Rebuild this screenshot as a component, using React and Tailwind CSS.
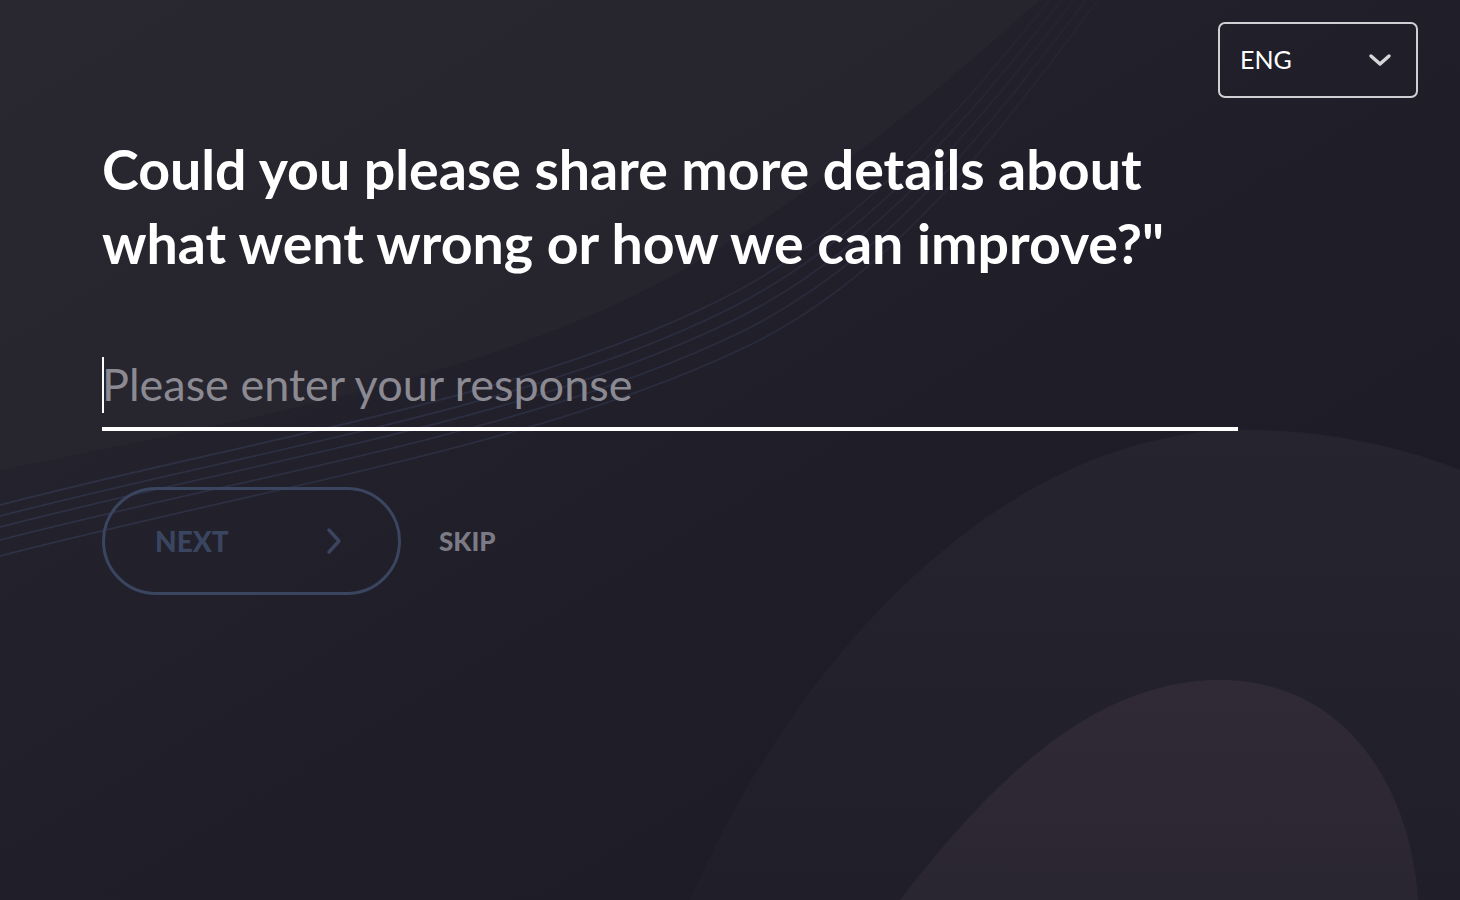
import { useState } from "react";

function Backdrop() {
  return (
    <svg className="absolute inset-0 h-full w-full" viewBox="0 0 1460 900" preserveAspectRatio="none">
      <defs>
        <linearGradient id="bg" x1="0" y1="0" x2="1" y2="1">
          <stop offset="0" stopColor="#292831" />
          <stop offset="0.5" stopColor="#1f1e29" />
          <stop offset="1" stopColor="#1b1a24" />
        </linearGradient>
        <linearGradient id="outer" x1="0" y1="0" x2="0" y2="1">
          <stop offset="0" stopColor="#25242f" />
          <stop offset="1" stopColor="#1f1e29" />
        </linearGradient>
        <linearGradient id="inner" x1="0" y1="0" x2="0" y2="1">
          <stop offset="0" stopColor="#302a36" />
          <stop offset="1" stopColor="#2a2631" />
        </linearGradient>
        <linearGradient id="swoosh" x1="0" y1="1" x2="1" y2="0">
          <stop offset="0" stopColor="#3a4260" stopOpacity="0.5" />
          <stop offset="0.6" stopColor="#3a4260" stopOpacity="0.35" />
          <stop offset="1" stopColor="#3a4260" stopOpacity="0.1" />
        </linearGradient>
      </defs>
      <rect width="1460" height="900" fill="url(#bg)" />
      <path d="M0 470 C 250 420, 520 370, 700 260 C 850 170, 960 70, 1040 0 L 0 0 Z" fill="#29283099" />
      <path d="M690 900 C 800 650, 1000 440, 1230 430 C 1330 428, 1410 450, 1460 470 L 1460 900 Z" fill="url(#outer)" />
      <path d="M900 900 C 1000 770, 1100 680, 1220 680 C 1340 680, 1410 780, 1418 900 Z" fill="url(#inner)" />
      <g fill="none" stroke="url(#swoosh)" strokeWidth="1.6">
        <path d="M0 505 C 250 440, 520 400, 720 300 C 860 230, 960 110, 1050 0" />
        <path d="M0 516 C 255 450, 525 410, 727 310 C 868 240, 968 118, 1062 0" />
        <path d="M0 527 C 260 460, 530 420, 734 320 C 876 250, 976 126, 1074 0" />
        <path d="M0 540 C 265 472, 535 432, 741 332 C 884 262, 984 134, 1086 0" />
        <path d="M0 556 C 270 486, 540 446, 748 346 C 892 276, 992 142, 1098 0" />
      </g>
    </svg>
  );
}

export default function App() {
  const [value, setValue] = useState("");
  return (
    <div className="relative h-[900px] w-full overflow-hidden bg-[#1e1d28]" style={{ fontFamily: "Lato, 'Open Sans', sans-serif" }}>
      <Backdrop />
      <div className="relative flex justify-end px-[42px] pt-[22px]">
        <button className="flex h-[76px] w-[200px] items-center justify-between rounded-[7px] border-2 border-[#cfcfd4] pl-[20px] pr-[24px] text-[25px] text-white">
          <span>ENG</span>
          <svg width="24" height="16" viewBox="0 0 24 16" fill="none" stroke="#d6d6da" strokeWidth="3.5" strokeLinecap="round" strokeLinejoin="round">
            <path d="M3 4 L12 12 L21 4" />
          </svg>
        </button>
      </div>
      <div className="relative pl-[102px] pt-[34px]">
        <h1 className="w-[1250px] text-[55.5px] font-bold leading-[74px] text-white">
          Could you please share more details about
          <br />
          what went wrong or how we can improve?"
        </h1>
        <div className="mt-[77px] w-[1136px] border-b-4 border-white pb-[14px]">
          <input
            value={value}
            onChange={(e) => setValue(e.target.value)}
            placeholder="Please enter your response"
            className="h-[56px] w-full border-l-2 border-white bg-transparent indent-[-2px] text-[45px] font-normal text-white placeholder-[#8b8a93] outline-none"
          />
        </div>
        <div className="mt-[56px] flex items-center gap-[38px]">
          <button className="flex h-[108px] w-[299px] items-center justify-between rounded-full border-[3px] border-[#3a4560] pl-[50px] pr-[56px] text-[28px] font-black text-[#3a4560]">
            <span>NEXT</span>
            <svg width="16" height="28" viewBox="0 0 16 28" fill="none" stroke="#3a4560" strokeWidth="3.5" strokeLinecap="round" strokeLinejoin="round">
              <path d="M3 3 L13 14 L3 25" />
            </svg>
          </button>
          <span className="text-[26px] font-black text-[#7c7b85]">SKIP</span>
        </div>
      </div>
    </div>
  );
}
